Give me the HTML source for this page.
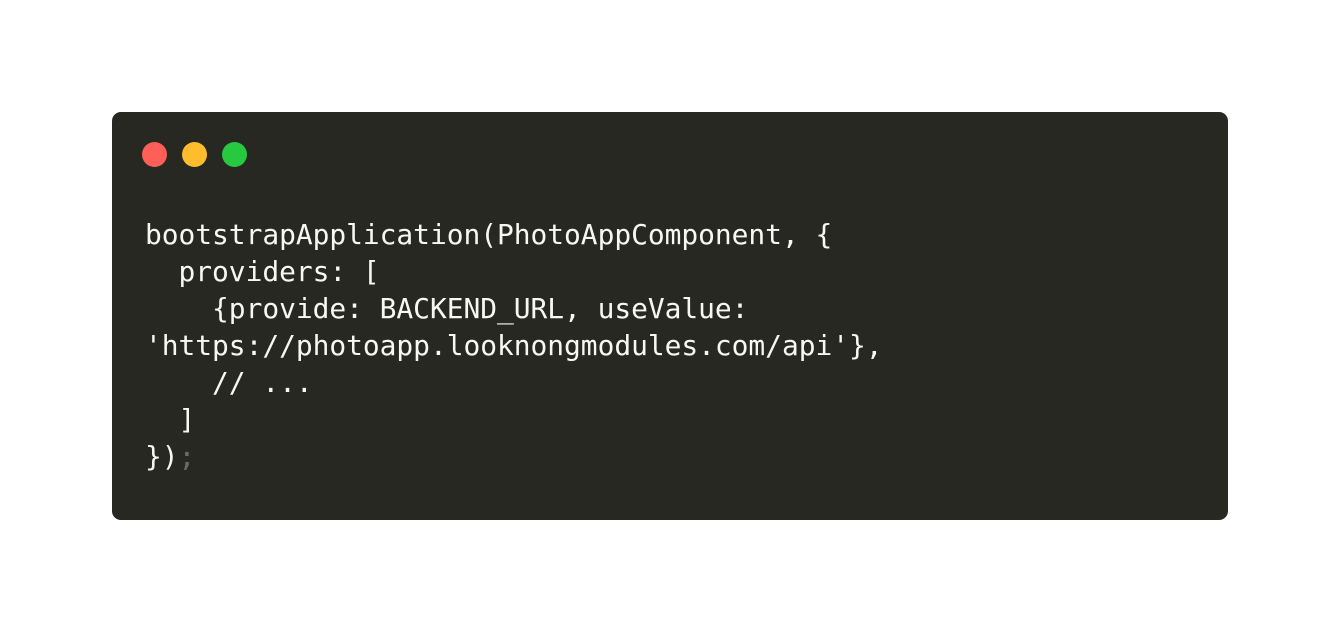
<!DOCTYPE html>
<html><head><meta charset="utf-8"><style>
html,body{margin:0;padding:0;background:#fff;width:1340px;height:632px;overflow:hidden}
.box{position:absolute;left:112px;top:112px;width:1116px;height:408px;background:#272822;border-radius:9px}
.dot{position:absolute;top:30px;width:25px;height:25px;border-radius:50%}
pre{position:absolute;left:33px;top:104px;margin:0;font-family:"DejaVu Sans Mono","Liberation Mono",monospace;font-size:27.9px;letter-spacing:-0.03px;line-height:37px;color:#f8f8f2}
.g{color:#6e6d5c}
</style></head><body>
<div class="box">
<div class="dot" style="left:30px;background:#ff5f56"></div>
<div class="dot" style="left:70px;background:#ffbd2e"></div>
<div class="dot" style="left:110px;background:#27c93f"></div>
<pre>bootstrapApplication(PhotoAppComponent, {
  providers: [
    {provide: BACKEND_URL, useValue:
'https://photoapp.looknongmodules.com/api'},
    // ...
  ]
})<span class="g">;</span></pre>
</div>
</body></html>
